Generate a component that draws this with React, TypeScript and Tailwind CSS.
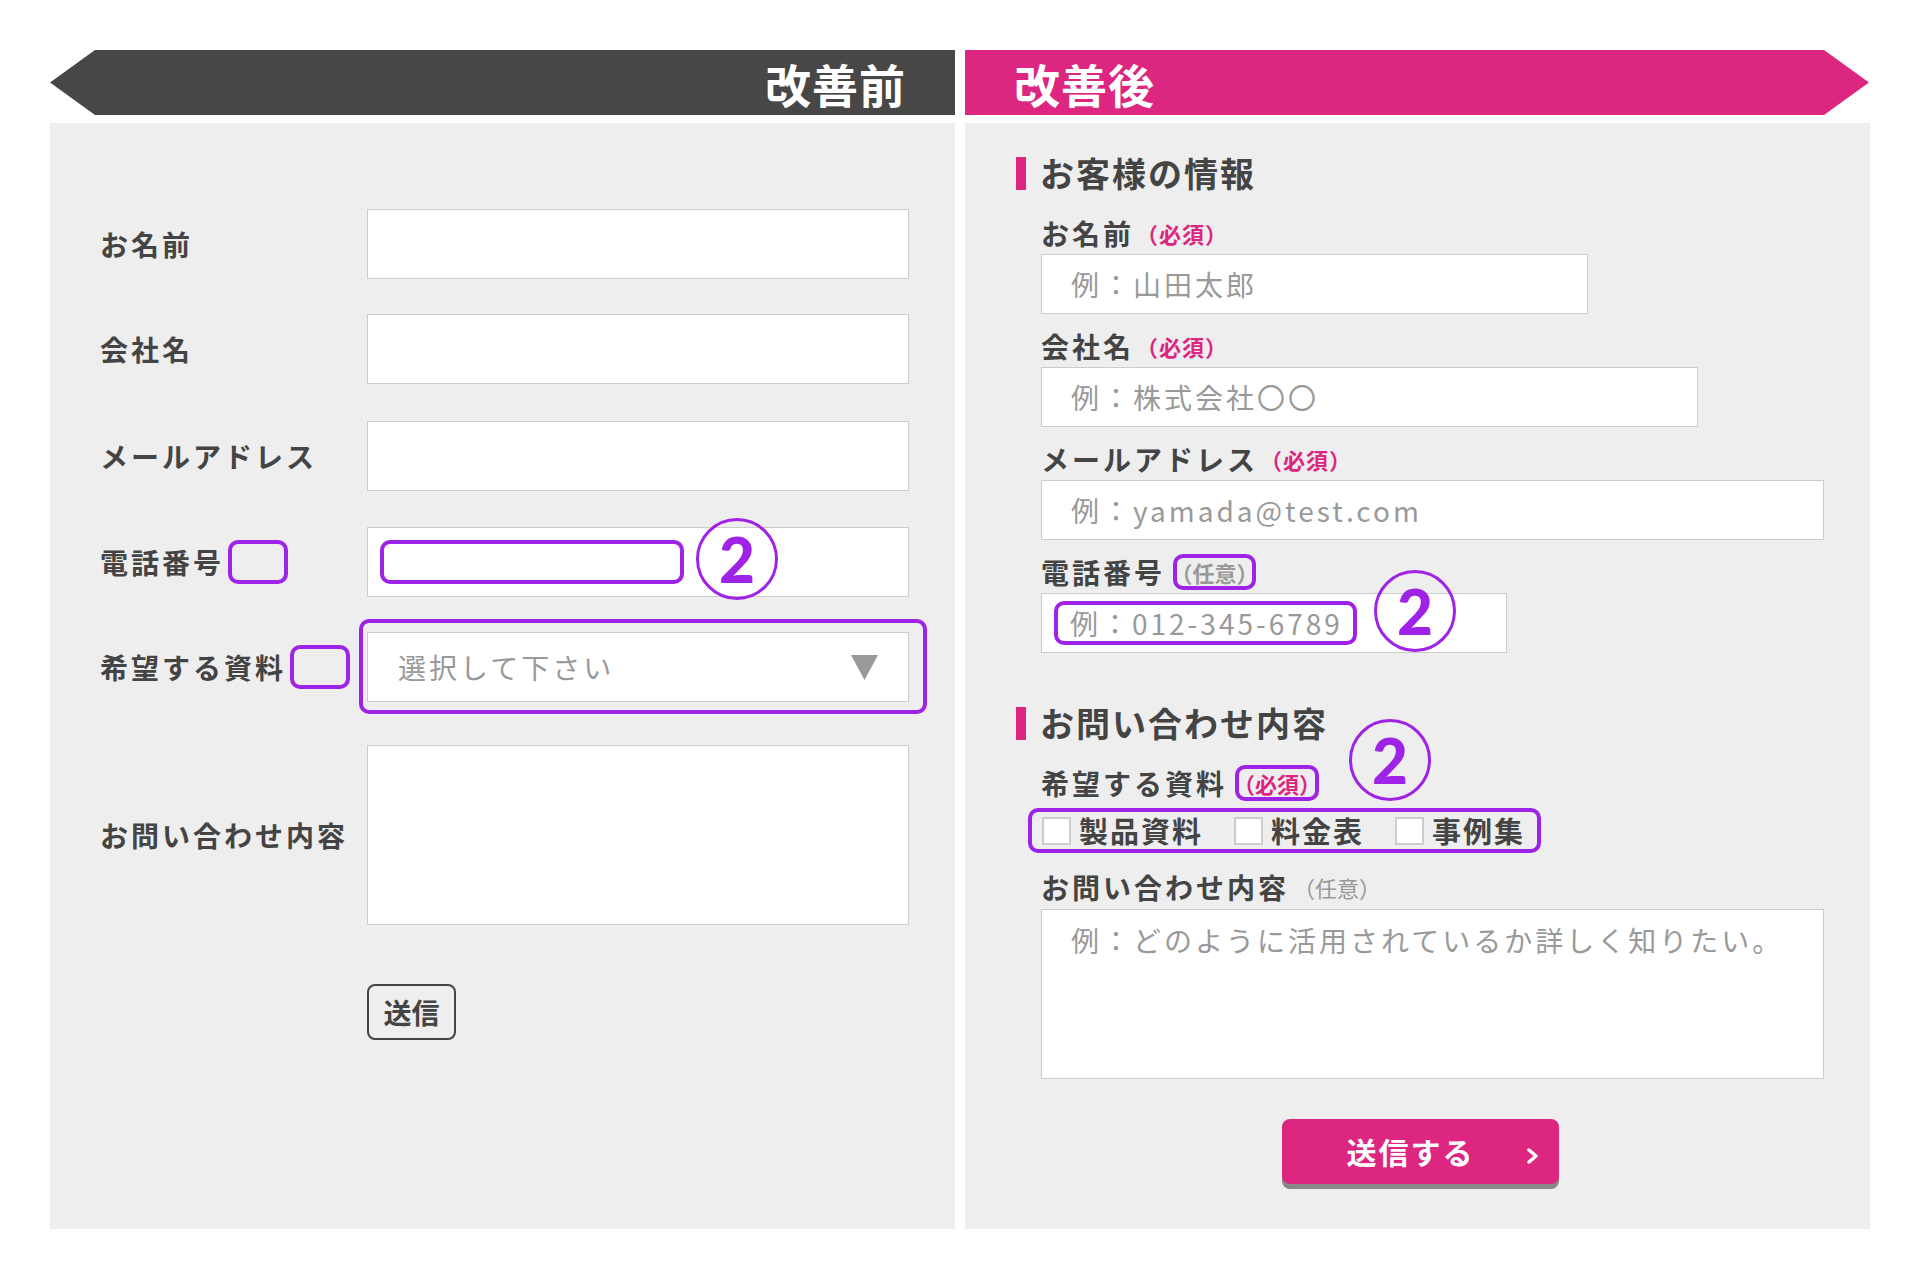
import React from "react";

// 比較図: 改善前（左）と改善後（右）のフォーム

const PURPLE = "border-[#9f23e6]";

function CircleTwo() {
  return (
    <div className={`flex h-[82px] w-[82px] shrink-0 items-center justify-center rounded-full border-[3.5px] ${PURPLE}`}>
      <span className="font-['Lato',sans-serif] text-[62px] font-black leading-none text-[#9f23e6]">2</span>
    </div>
  );
}

function LeftRow({ label, children, mark, className = "" }: { label: string; children: React.ReactNode; mark?: boolean; className?: string }) {
  return (
    <div className={`flex items-center ${className}`}>
      <div className="flex w-[267px] items-center">
        <span className="text-[28px] font-bold tracking-[3px] text-[#444]">{label}</span>
        {mark && <span className={`ml-[4px] h-[44px] w-[60px] rounded-[10px] border-4 ${PURPLE}`} />}
      </div>
      {children}
    </div>
  );
}

function BeforePanel() {
  const input = "h-[70px] w-[542px] border border-[#cccccc] bg-white";
  return (
    <div className="h-[1106px] w-[905px] bg-[#eeeeee] pl-[50px] pt-[86px]">
      <LeftRow label="お名前">
        <div className={input} />
      </LeftRow>
      <LeftRow label="会社名" className="mt-[35px]">
        <div className={input} />
      </LeftRow>
      <LeftRow label="メールアドレス" className="mt-[37px]">
        <div className={input} />
      </LeftRow>
      <LeftRow label="電話番号" mark className="mt-[36px]">
        <div className={`${input} flex items-center pl-[12px]`}>
          <div className={`h-[44px] w-[304px] rounded-[10px] border-4 ${PURPLE}`} />
          <div className="ml-[12px] -mt-[6px]">
            <CircleTwo />
          </div>
        </div>
      </LeftRow>
      <LeftRow label="希望する資料" mark className="mt-[35px]">
        <div className={`${input} relative flex items-center justify-between pl-[30px] pr-[30px]`}>
          <span className="text-[28px] font-normal tracking-[3px] text-[#999]">選択して下さい</span>
          <svg width="27" height="25" viewBox="0 0 27 25">
            <polygon points="0,0 27,0 13.5,25" fill="#999" />
          </svg>
          <div className={`absolute -bottom-[13px] -left-[9px] -right-[19px] -top-[14px] rounded-[10px] border-4 ${PURPLE}`} />
        </div>
      </LeftRow>
      <LeftRow label="お問い合わせ内容" className="mt-[43px]">
        <div className="h-[180px] w-[542px] border border-[#cccccc] bg-white" />
      </LeftRow>
      <div className="ml-[267px] mt-[59px] flex h-[56px] w-[89px] items-center justify-center rounded-[8px] border-[2.5px] border-[#444] text-[28px] font-bold text-[#444]">
        送信
      </div>
    </div>
  );
}

function SectionTitle({ children }: { children: React.ReactNode }) {
  return (
    <div className="flex h-[48px] items-center pl-[51px]">
      <span className="h-[33px] w-[10px] bg-[#dc267f]" />
      <span className="ml-[14px] text-[34px] font-bold leading-[48px] tracking-[2px] text-[#444]">{children}</span>
    </div>
  );
}

function Label({ text, tag, className = "" }: { text: string; tag?: React.ReactNode; className?: string }) {
  return (
    <div className={`flex h-[40px] items-center ${className}`}>
      <span className="text-[28px] font-bold tracking-[3px] text-[#444]">{text}</span>
      {tag}
    </div>
  );
}

const Required = () => (
  <span className="ml-[2px] text-[22px] font-bold tracking-[1px] text-[#dc267f]">（必須）</span>
);

function Field({ label, placeholder, width, className = "" }: { label: string; placeholder: string; width: string; className?: string }) {
  return (
    <div className={className}>
      <Label text={label} tag={<Required />} />
      <div className={`mt-[1px] flex h-[60px] items-center border border-[#cccccc] bg-white pl-[29px] ${width}`}>
        <span className="text-[28px] font-normal tracking-[3px] text-[#999]">{placeholder}</span>
      </div>
    </div>
  );
}

function AfterPanel() {
  return (
    <div className="h-[1106px] w-[905px] bg-[#eeeeee] pt-[26px]">
      <SectionTitle>お客様の情報</SectionTitle>
      <div className="pl-[76px]">
        <Field className="mt-[16px]" label="お名前" placeholder="例：山田太郎" width="w-[547px]" />
        <Field className="mt-[12px]" label="会社名" placeholder="例：株式会社〇〇" width="w-[657px]" />
        <Field className="mt-[12px]" label="メールアドレス" placeholder="例：yamada@test.com" width="w-[783px]" />
        <div className="mt-[12px]">
          <Label
            text="電話番号"
            tag={
              <span className={`ml-[8px] flex h-[36px] w-[83px] items-center justify-center whitespace-nowrap rounded-[10px] border-4 ${PURPLE}`}>
                <span className="text-[22px] font-bold text-[#999]">（任意）</span>
              </span>
            }
          />
          <div className="relative mt-[1px] flex h-[60px] w-[466px] items-center border border-[#cccccc] bg-white pl-[12px]">
            <div className={`flex h-[44px] w-[303px] items-center rounded-[10px] border-4 pl-[12px] ${PURPLE}`}>
              <span className="whitespace-nowrap text-[28px] font-normal tracking-[3px] text-[#999]">例：012-345-6789</span>
            </div>
            <div className="absolute left-[332px] top-[-24px]">
              <CircleTwo />
            </div>
          </div>
        </div>
      </div>

      <div className="relative mt-[46px]">
        <SectionTitle>お問い合わせ内容</SectionTitle>
        <div className="absolute left-[384px] top-[20px]">
          <CircleTwo />
        </div>
      </div>
      <div className="pl-[76px]">
        <Label
          className="mt-[16px]"
          text="希望する資料"
          tag={
            <span className={`ml-[8px] flex h-[36px] w-[84px] items-center justify-center whitespace-nowrap rounded-[10px] border-4 ${PURPLE}`}>
              <span className="text-[22px] font-bold text-[#dc267f]">（必須）</span>
            </span>
          }
        />
        <div className={`-ml-[13px] mt-[5px] inline-flex h-[45px] items-center rounded-[10px] border-4 pl-[10px] pr-[12px] ${PURPLE}`}>
          {["製品資料", "料金表", "事例集"].map((item, i) => (
            <div key={item} className={`flex items-center ${i > 0 ? "ml-[31px]" : ""}`}>
              <span className="h-[28px] w-[29px] border-2 border-[#cccccc] bg-white" />
              <span className="ml-[8px] text-[29px] font-bold leading-none tracking-[2px] text-[#444]">{item}</span>
            </div>
          ))}
        </div>
        <Label
          className="mt-[14px]"
          text="お問い合わせ内容"
          tag={<span className="ml-[4px] text-[22px] font-normal text-[#999]">（任意）</span>}
        />
        <div className="mt-[2px] h-[170px] w-[783px] border border-[#cccccc] bg-white pl-[29px] pt-[10px]">
          <span className="text-[28px] font-normal leading-[40px] tracking-[3px] text-[#999]">
            例：どのように活用されているか詳しく知りたい。
          </span>
        </div>
      </div>

      <div className="mt-[40px] flex justify-center pl-[6px]">
        <div className="relative flex h-[65px] w-[277px] items-center justify-center rounded-[8px] bg-[#dc267f] pr-[20px] shadow-[0_5px_0_#888888]">
          <span className="text-[30px] font-bold tracking-[2px] text-white">送信する</span>
          <svg className="absolute right-[20px] top-[29px]" width="13" height="16" viewBox="0 0 13 16">
            <polyline points="3,2 10,8 3,14" fill="none" stroke="white" strokeWidth="3.5" strokeLinecap="round" strokeLinejoin="round" />
          </svg>
        </div>
      </div>
    </div>
  );
}

export default function App() {
  return (
    <div className="h-[1280px] w-[1920px] bg-white pl-[50px] pt-[50px] font-['Noto_Sans_CJK_JP',sans-serif]">
      <div className="flex h-[65px] gap-[10px]">
        <div className="flex w-[905px] items-center justify-end bg-[#474747] pr-[49px] [clip-path:polygon(45px_0,100%_0,100%_100%,45px_100%,0_50%)]">
          <span className="text-[46px] font-bold leading-none tracking-[1px] text-white">改善前</span>
        </div>
        <div className="flex w-[905px] items-center bg-[#dc267f] pl-[49px] [clip-path:polygon(0_0,859px_0,904px_50%,859px_100%,0_100%)]">
          <span className="text-[46px] font-bold leading-none tracking-[1px] text-white">改善後</span>
        </div>
      </div>
      <div className="mt-[8px] flex gap-[10px]">
        <BeforePanel />
        <AfterPanel />
      </div>
    </div>
  );
}
